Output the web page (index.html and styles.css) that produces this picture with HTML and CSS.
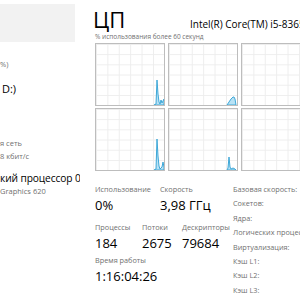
FILE: index.html
```html
<!DOCTYPE html>
<html lang="ru">
<head>
  <meta charset="UTF-8">
  <meta name="viewport" content="width=device-width, initial-scale=1.0">
  <title>Диспетчер задач — ЦП</title>
  <link rel="stylesheet" href="styles.css">
</head>
<body>
  <div class="app">
    <!-- Боковая панель (обрезана слева) -->
    <aside class="sidebar">
      <div class="side-selected"></div>
      <div class="side-sub mem">%)</div>
      <div class="side-title disk">D:)</div>
      <div class="side-sub net">я сеть</div>
      <div class="side-sub net2">8 кбит/с</div>
      <div class="side-title gpu">кий процессор 0</div>
      <div class="side-sub gpu2">Graphics 620</div>
    </aside>

    <main class="perf">
      <header class="perf-head">
        <h1>ЦП</h1>
        <span class="cpu-name">Intel(R) Core(TM) i5-8365U CPU @ 1.60GHz</span>
      </header>
      <p class="graph-caption">% использования более 60 секунд</p>

      <div class="graphs">
        <div class="graph">
          <svg viewBox="0 0 68 61" preserveAspectRatio="none">
            <path d="M58,61 L60,60 L61,36 L62,50 L63,58 L64,60 L65,56 L66,59 L67,57 L68,55 L68,61 Z"/>
          </svg>
        </div>
        <div class="graph">
          <svg viewBox="0 0 68 61" preserveAspectRatio="none">
            <path d="M58,61 L60,58 L62,55 L64,53 L65,53 L66,55 L67,61 Z"/>
          </svg>
        </div>
        <div class="graph"></div>
        <div class="graph">
          <svg viewBox="0 0 68 61" preserveAspectRatio="none">
            <path d="M58,61 L60,60 L61,30 L62,47 L63,57 L64,60 L66,58 L67,53 L68,58 L68,61 Z"/>
          </svg>
        </div>
        <div class="graph">
          <svg viewBox="0 0 68 61" preserveAspectRatio="none">
            <path d="M58,61 L59,59 L60,48 L61,58 L62,60 L64,59 L66,60 L67,61 Z"/>
          </svg>
        </div>
        <div class="graph"></div>
      </div>

      <section class="details">
        <div class="dynamic">
          <div class="stat-row row1">
            <div class="stat w65"><span class="label">Использование</span><span class="value">0%</span></div>
            <div class="stat"><span class="label">Скорость</span><span class="value">3,98 ГГц</span></div>
          </div>
          <div class="stat-row row2">
            <div class="stat w47"><span class="label">Процессы</span><span class="value">184</span></div>
            <div class="stat w40"><span class="label">Потоки</span><span class="value">2675</span></div>
            <div class="stat"><span class="label">Дескрипторы</span><span class="value">79684</span></div>
          </div>
          <div class="stat-row row3">
            <div class="stat"><span class="label">Время работы</span><span class="value">1:16:04:26</span></div>
          </div>
        </div>
        <ul class="static">
          <li>Базовая скорость:</li>
          <li>Сокетов:</li>
          <li>Ядра:</li>
          <li>Логических процессоров:</li>
          <li>Виртуализация:</li>
          <li>Кэш L1:</li>
          <li>Кэш L2:</li>
          <li>Кэш L3:</li>
        </ul>
      </section>
    </main>
  </div>
</body>
</html>
```

FILE: styles.css
```css
:root {
  --text: #000;
  --muted: #707070;
  --graph-border: #bdbdbd;
  --graph-grid: #ededed;
  --line: #3fa8d8;
  --fill: #b8e2f5;
  --font: 'Open Sans', 'Noto Sans', sans-serif;
}
* { box-sizing: border-box; }
html, body { margin:0; padding:0; }
body { width:300px; height:300px; overflow:hidden; background:#fff; font-family:var(--font); color:var(--text); }
.app { display:flex; height:100%; }

/* Sidebar */
.sidebar { width:80px; flex:none; overflow:hidden; white-space:nowrap; display:flex; flex-direction:column; }
.side-selected { width:75px; height:38px; margin-top:4px; background:#f2f2f2; }
.side-sub { font-size:7.5px; line-height:12px; color:var(--muted); }
.side-title { font-size:11px; line-height:14px; }
.mem { margin-top:16px; }
.disk { margin-top:12px; padding-left:2px; }
.net { margin-top:41px; }
.net2 { margin-top:1px; }
.gpu { margin-top:9px; font-size:10.2px; letter-spacing:-0.1px; }

/* Main */
.perf { flex:1; min-width:0; padding-left:13px; white-space:nowrap; overflow:hidden; }
.perf-head { display:flex; align-items:baseline; padding-top:6px; }
.perf-head h1 { margin:0; width:97px; flex:none; font-size:22px; line-height:26px; font-weight:400; }
.cpu-name { font-size:10px; }
.graph-caption { margin:1px 0 0 2px; font-size:6.5px; line-height:8px; color:var(--muted); }

.graphs { display:grid; grid-template-columns:repeat(3,70px); grid-auto-rows:63px; gap:2px 3px; margin:2px 0 0 2px; }
.graph { border:1px solid var(--graph-border);
  background-image:linear-gradient(var(--graph-grid) 1px, transparent 1px), linear-gradient(90deg, var(--graph-grid) 1px, transparent 1px);
  background-size:11.4px 10.2px;
}
.graph svg { display:block; width:100%; height:100%; }
.graph path { fill:var(--fill); stroke:var(--line); stroke-width:1; vector-effect:non-scaling-stroke; }

/* Details */
.details { display:flex; padding-left:2px; }
.dynamic { width:138px; flex:none; }
.stat-row { display:flex; }
.row1 { margin-top:12px; }
.row2 { margin-top:7px; }
.row3 { margin-top:2px; }
.stat { display:flex; flex-direction:column; gap:1px; }
.w65 { width:65px; }
.w47 { width:47px; }
.w40 { width:40px; }
.label { font-size:7.3px; line-height:12px; color:var(--muted); }
.value { font-size:13px; line-height:18px; }
.static { list-style:none; margin:11px 0 0; padding:0; }
.static li { font-size:7.3px; line-height:14.4px; color:var(--muted); }
```
